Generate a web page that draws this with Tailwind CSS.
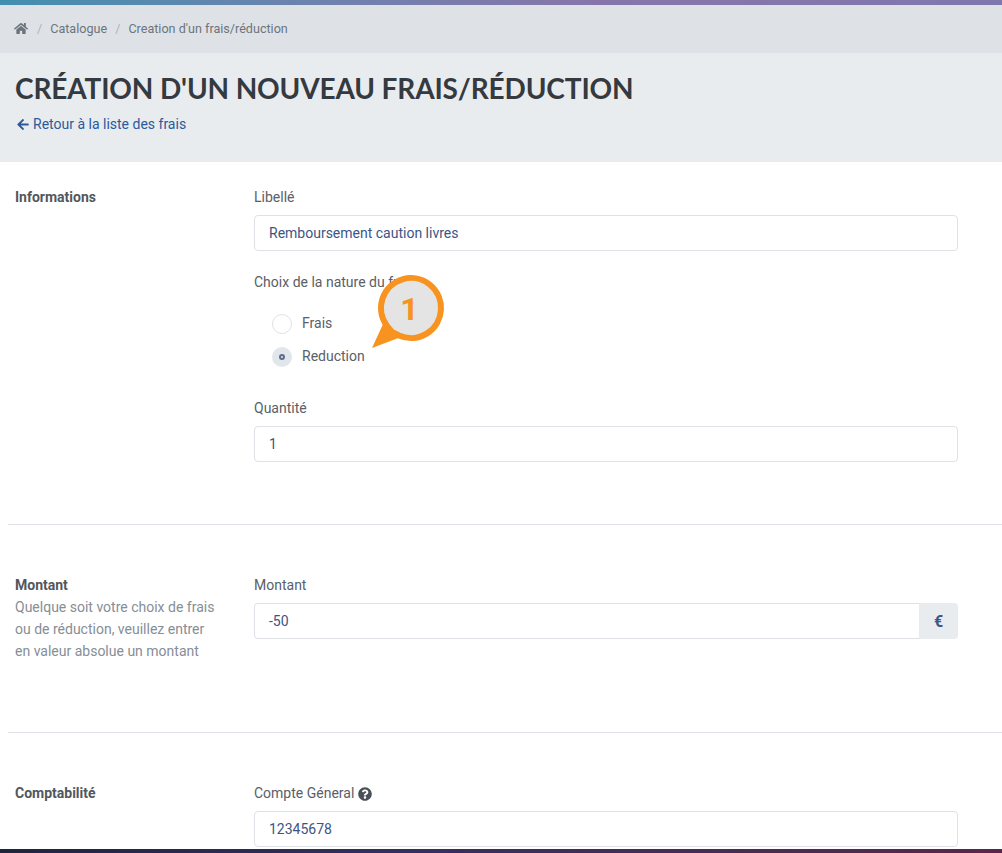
<!DOCTYPE html>
<html lang="fr">
<head>
<meta charset="utf-8">
<script src="https://cdn.jsdelivr.net/npm/@tailwindcss/browser@4"></script>
</head>
<body class="m-0 bg-white">
<div class="relative w-[1002px] h-[853px] overflow-hidden font-['Roboto',sans-serif] text-[14px] leading-[21px] text-[#5a6067]">
  <div class="h-[5px] bg-gradient-to-r from-[#3f8fb0] via-[#8775aa] via-60% to-[#7f78ad]"></div>
  <nav class="h-[48px] bg-[#dee2e6] flex items-center pb-[2px] pl-[14px] text-[12.6px] text-[#6c757d]">
    <svg class="w-[14px] h-[13px] fill-[#6c757d]" viewBox="0 0 576 512"><path d="M280.4 148.3 96 300.1V464a16 16 0 0 0 16 16l112-.3a16 16 0 0 0 15.9-16V368a16 16 0 0 1 16-16h64a16 16 0 0 1 16 16v95.6a16 16 0 0 0 16 16.1l112 .3a16 16 0 0 0 16-16V300L295.700 148.300a12.200 12.200 0 0 0-15.300 0zM571.600 251.500 488 182.600V44.100a12 12 0 0 0-12-12h-56a12 12 0 0 0-12 12v72.600L318.500 43a48 48 0 0 0-61 0L4.300 251.500a12 12 0 0 0-1.600 16.900l25.500 31A12 12 0 0 0 45.200 301l235.200-193.700a12.200 12.200 0 0 1 15.300 0L530.900 301a12 12 0 0 0 16.900-1.600l25.500-31a12 12 0 0 0-1.700-16.900z"/></svg>
    <span class="ml-[9px] text-[#adb5bd]">/</span>
    <span class="ml-[8px]">Catalogue</span>
    <span class="ml-[8px] text-[#adb5bd]">/</span>
    <span class="ml-[8px]">Creation d'un frais/réduction</span>
  </nav>
  <header class="h-[109px] bg-[#e9ecef] pl-[15px] pt-[16px]">
    <h1 class="m-0 font-['Lato',sans-serif] font-bold text-[28px] leading-[38px] tracking-[-0.14px] text-[#343a40]">CRÉATION D'UN NOUVEAU FRAIS/RÉDUCTION</h1>
    <a class="mt-[7px] flex items-center text-[14px] text-[#2a5a9c]">
      <svg class="ml-[2px] mr-[4px] w-[12px] h-[13px] fill-[#2a5a9c]" viewBox="0 0 448 512"><path d="m257.500 445.100-22.200 22.200c-9.400 9.400-24.600 9.400-33.900 0L7 273c-9.400-9.400-9.400-24.600 0-33.900L201.400 44.700c9.400-9.400 24.600-9.400 33.900 0l22.200 22.200c9.500 9.500 9.300 25-.4 34.300L136.600 216H424c13.300 0 24 10.700 24 24v32c0 13.300-10.700 24-24 24H136.600l120.500 114.800c9.800 9.300 10 24.800.4 34.300z"/></svg>
      Retour à la liste des frais
    </a>
  </header>

  <main class="pl-[8px]">
    <section class="h-[363px] border-b border-[#dee2e6] flex pt-[25px]">
      <div class="w-[246px] pl-[7px] font-bold text-[#52575d]">Informations</div>
      <div class="w-[704px]">
        <label class="block">Libellé</label>
        <div class="mt-[7px] h-[36px] border border-[#dee2e6] rounded-[4px] px-[14px] flex items-center text-[#3c5585]">Remboursement caution livres</div>
        <label class="block mt-[21px]">Choix de la nature du frais</label>
        <div class="mt-[14px] ml-[18px] flex items-center h-[33px]">
          <span class="w-[20px] h-[20px] rounded-full border border-[#dee2e6] bg-white"></span>
          <span class="ml-[10px]">Frais</span>
        </div>
        <div class="ml-[18px] flex items-center h-[33px]">
          <span class="w-[20px] h-[20px] rounded-full bg-[#e2e6ea] flex items-center justify-center"><span class="w-[6px] h-[6px] rounded-full border-2 border-[#5b6f92] bg-[#dfe3e8]"></span></span>
          <span class="ml-[10px]">Reduction</span>
        </div>
        <label class="block mt-[25px]">Quantité</label>
        <div class="mt-[7px] h-[36px] border border-[#dee2e6] rounded-[4px] px-[14px] flex items-center text-[#3c5585]">1</div>
      </div>
    </section>

    <section class="h-[208px] border-b border-[#dee2e6] flex pt-[50px]">
      <div class="w-[246px] pl-[7px]">
        <div class="font-bold text-[#52575d]">Montant</div>
        <p class="m-0 text-[#868e96] leading-[22px] w-[205px]">Quelque soit votre choix de frais ou de réduction, veuillez entrer en valeur absolue un montant</p>
      </div>
      <div class="w-[704px]">
        <label class="block">Montant</label>
        <div class="mt-[7px] h-[36px] flex text-[#3c5585]">
          <div class="flex-1 border border-r-0 border-[#dee2e6] rounded-l-[4px] px-[14px] flex items-center">-50</div>
          <div class="w-[39px] bg-[#e9ecef] rounded-r-[4px] flex items-center justify-center font-bold text-[16px] text-[#3e5585]">€</div>
        </div>
      </div>
    </section>

    <section class="flex pt-[50px]">
      <div class="w-[246px] pl-[7px] font-bold text-[#52575d]">Comptabilité</div>
      <div class="w-[704px]">
        <label class="flex items-center">Compte Géneral
          <svg class="ml-[4px] w-[14px] h-[14px] fill-[#495057]" viewBox="0 0 512 512"><path d="M504 256c0 137-111 248-248 248S8 393 8 256 119 8 256 8s248 111 248 248zM262.700 90c-54.500 0-89.300 23-116.500 63.800-3.500 5.300-2.400 12.400 2.700 16.300l34.700 26.300c5.200 3.900 12.600 3 16.700-2.100 17.900-22.700 30.100-35.800 57.300-35.800 20.400 0 45.700 13.100 45.700 33 0 15-12.400 22.700-32.600 34C247.100 238.500 216 254.900 216 296v4c0 6.600 5.400 12 12 12h56c6.600 0 12-5.400 12-12v-1.300c0-28.500 83.200-29.600 83.200-106.700 0-58-60.200-102-116.500-102zM256 338c-25.400 0-46 20.600-46 46 0 25.400 20.600 46 46 46s46-20.600 46-46c0-25.400-20.600-46-46-46z"/></svg>
        </label>
        <div class="mt-[7px] h-[36px] border border-[#dee2e6] rounded-[4px] px-[14px] flex items-center text-[#3c5585]">12345678</div>
      </div>
    </section>
  </main>

  <div class="absolute left-0 right-0 bottom-0 h-[4px] bg-gradient-to-r from-[#1d2440] via-[#33305c] via-40% to-[#57264f]"></div>

  <svg class="absolute left-[370px] top-[272px] w-[76px] h-[80px]" viewBox="0 0 76 80">
    <polygon points="14,50 2,76 31,65 26,56 21,54" fill="#f7931e"/>
    <path d="M17 54 A30 30 0 1 1 29 63.500 L22 60 Z" fill="#e4e4e4" stroke="#f7931e" stroke-width="6" stroke-linejoin="round"/>
    <text x="39.500" y="48" text-anchor="middle" font-family="Roboto, sans-serif" font-weight="700" font-size="32" fill="#f7931e">1</text>
  </svg>
</div>
</body>
</html>
